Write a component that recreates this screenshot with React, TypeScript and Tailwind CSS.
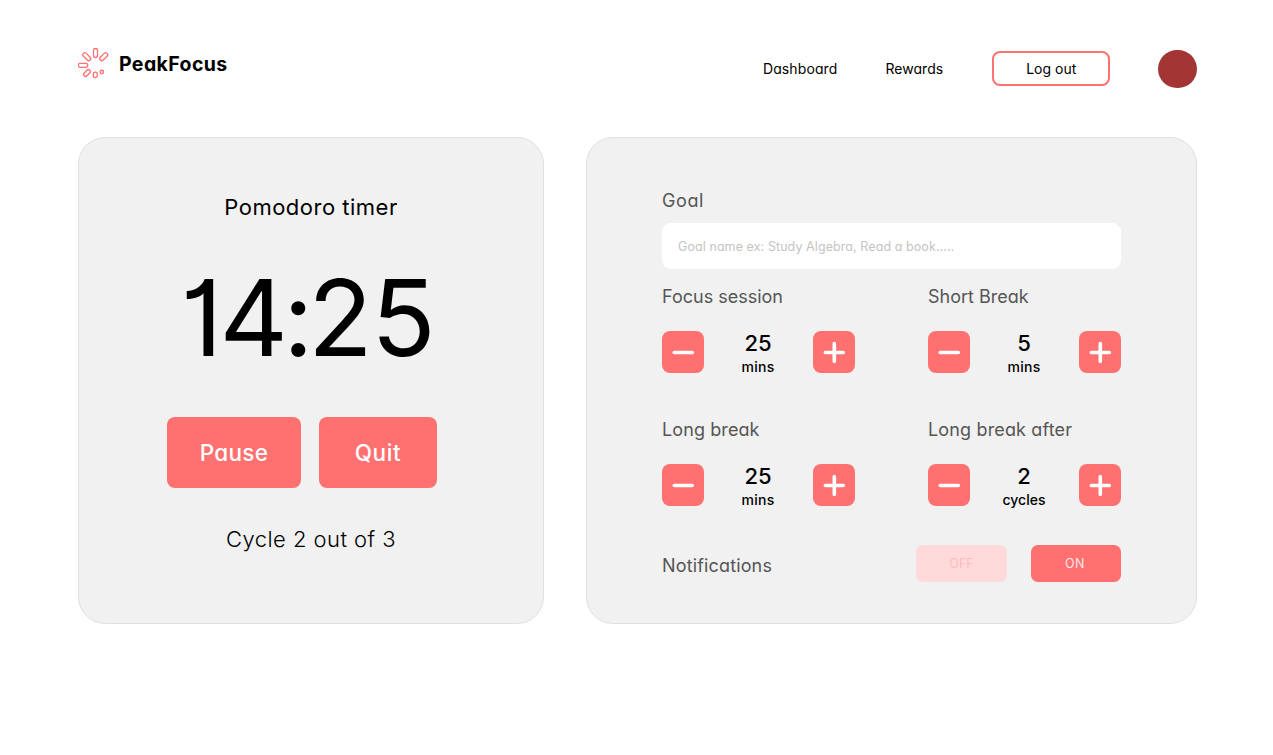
const PETALS = [
  { x: 17.5, y: 5, l: 9, w: 4, a: 90 },
  { x: 25.7, y: 8.7, l: 9.5, w: 4, a: 135 },
  { x: 8.8, y: 8.7, l: 9.5, w: 4, a: 45 },
  { x: 5, y: 17.3, l: 9.5, w: 4, a: 0 },
  { x: 9, y: 25, l: 8, w: 4, a: 135 },
  { x: 17.3, y: 26.8, l: 5.5, w: 4, a: 90 },
  { x: 23.8, y: 24, l: 3.5, w: 3.5, a: 0 },
];

function Logo() {
  return (
    <svg className="h-[31px] w-[31px] shrink-0" viewBox="0 0 31 31" fill="none" stroke="#ff7070" strokeWidth="1.3">
      {PETALS.map((p, i) => (
        <rect
          key={i}
          x={p.x - p.l / 2}
          y={p.y - p.w / 2}
          width={p.l}
          height={p.w}
          rx={p.w / 2}
          transform={`rotate(${p.a} ${p.x} ${p.y})`}
        />
      ))}
    </svg>
  );
}

function StepButton({ plus }: { plus?: boolean }) {
  return (
    <button className="flex size-[42px] items-center justify-center rounded-lg bg-[#ff7070]" aria-label={plus ? "+" : "−"}>
      <svg className="size-[42px]" viewBox="0 0 42 42" stroke="#fff" strokeWidth="3.6" strokeLinecap="round">
        <path d={plus ? "M12.3 21.5H30.3M21.3 12.5V30.5" : "M12.3 21.5H30.3"} />
      </svg>
    </button>
  );
}

type StepperProps = {
  label: string;
  labelClass?: string;
  value: string;
  unit: string;
  unitClass?: string;
};

function Stepper({ label, labelClass = "", value, unit, unitClass = "" }: StepperProps) {
  return (
    <div className="h-[133px] w-[193px]">
      <div className={`h-[45px] text-[18px] leading-[22px] whitespace-nowrap text-[#555] ${labelClass}`}>{label}</div>
      <div className="flex justify-between">
        <StepButton />
        <div className="flex flex-col items-center pr-px font-medium text-black">
          <span className="h-[25px] text-[22px] leading-[25px]">{value}</span>
          <span className={`text-[14px] ${unitClass}`}>{unit}</span>
        </div>
        <StepButton plus />
      </div>
    </div>
  );
}

export default function App() {
  return (
    <div className="h-[755px] w-[1273px] overflow-hidden bg-white font-['Inter',sans-serif] text-black [font-feature-settings:'cv11','cv01']">
      <header className="flex h-[137px] items-start justify-between pr-[76.4px] pl-[78px]">
        <div className="flex items-center gap-[10px] pt-[48px]">
          <Logo />
          <span className="pt-0.5 text-[19.5px] font-bold tracking-[0.4px]">PeakFocus</span>
        </div>
        <nav className="flex items-center pt-[49.6px] text-[14px]">
          <span className="mr-[48px] tracking-[0.1px]">Dashboard</span>
          <span className="mr-[49px] tracking-[0.05px]">Rewards</span>
          <button className="mr-12 h-[35px] w-[118px] rounded-lg border-2 border-[#ff7070]">Log out</button>
          <div className="size-[38.4px] rounded-full bg-[#a33535]" />
        </nav>
      </header>
      <main className="flex gap-[42px] pl-[78px]">
        <section className="flex h-[487px] w-[466px] flex-col items-center rounded-[27px] border border-[#e0e0e0] bg-[#f1f1f1] pt-[54px]">
          <h1 className="h-[30px] text-[22px] leading-[30px] tracking-[0.5px]">Pomodoro timer</h1>
          <div className="mt-[41px] mr-[6px] h-[110px] text-[106px] leading-[110px] [font-feature-settings:'cv11','cv01','calt'_0]">
            <span className="tracking-[-3px]">1</span>
            <span className="tracking-[-5px]">4</span>
            <span className="tracking-[-5.5px]">:</span>
            <span className="tracking-[-1.5px]">2</span>
            <span>5</span>
          </div>
          <div className="mt-[44px] mr-[18px] flex gap-[18px] text-[22.5px] font-medium text-white">
            <button className="h-[71px] w-[134px] rounded-lg bg-[#ff7070] pt-px tracking-[0.3px]">Pause</button>
            <button className="h-[71px] w-[118px] rounded-lg bg-[#ff7070] pt-px tracking-[0.6px]">Quit</button>
          </div>
          <p className="mt-9 text-[22px] leading-[30px] font-light tracking-[0.45px]">Cycle 2 out of 3</p>
        </section>
        <section className="h-[487px] w-[611px] rounded-[27px] border border-[#e0e0e0] bg-[#f1f1f1] pt-[52px] pl-[75px]">
          <div className="h-[33px] text-[18px] leading-[22px] tracking-[0.6px] text-[#555]">Goal</div>
          <div className="h-[46px] w-[459px] rounded-[9px] bg-white px-4 text-[12.5px] leading-[47px] tracking-[0.08px] text-[#c4c4c4]">
            Goal name ex: Study Algebra, Read a book.....
          </div>
          <div className="mt-[17px] grid h-[259px] w-[459px] grid-cols-[193px_193px] content-start justify-between">
            <Stepper label="Focus session" value="25" unit="mins" unitClass="tracking-[0.3px]" />
            <Stepper label="Short Break" value="5" unit="mins" unitClass="tracking-[0.3px]" />
            <Stepper label="Long break" labelClass="tracking-[0.1px]" value="25" unit="mins" unitClass="tracking-[0.3px]" />
            <Stepper label="Long break after" labelClass="tracking-[0.15px]" value="2" unit="cycles" />
          </div>
          <div className="flex w-[459px] items-center">
            <span className="mr-auto pt-1 text-[18px] leading-[22px] tracking-[0.15px] text-[#555]">Notifications</span>
            <button className="mr-6 h-[37px] w-[91px] rounded-[7px] bg-[#ffdada] pt-px text-[12.5px] text-[#ffbcbc]">OFF</button>
            <button className="h-[37px] w-[90px] rounded-[7px] bg-[#ff7070] pt-px pr-0.5 text-[12.5px] tracking-[0.4px] text-[#ffe9e9]">ON</button>
          </div>
        </section>
      </main>
    </div>
  );
}
